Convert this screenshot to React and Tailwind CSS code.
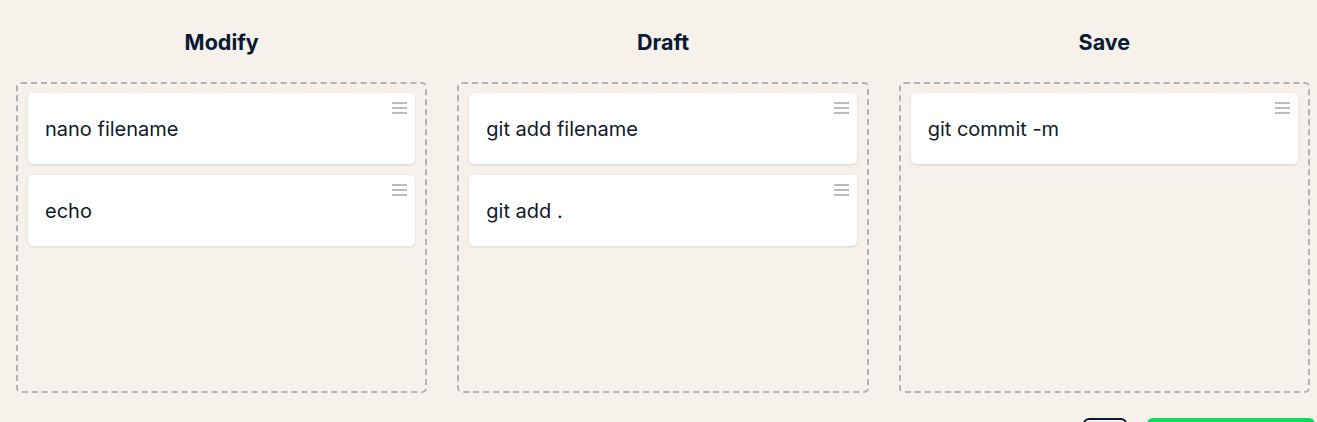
import React from "react";

const columns = [
  { title: "Modify", items: ["nano filename", "echo"] },
  { title: "Draft", items: ["git add filename", "git add ."] },
  { title: "Save", items: ["git commit -m"] },
];

function Handle() {
  return (
    <svg width="15" height="12" viewBox="0 0 15 12" className="absolute right-[8px] top-[9px]">
      <rect x="0" y="0" width="15" height="2" fill="#b9bcc4" />
      <rect x="0" y="5" width="15" height="2" fill="#b9bcc4" />
      <rect x="0" y="10" width="15" height="2" fill="#b9bcc4" />
    </svg>
  );
}

function Card({ label }) {
  return (
    <div className="relative flex h-[71px] items-center rounded-[5px] bg-white pl-[17px] shadow-[0_1px_3px_rgba(0,0,0,0.12)]">
      <span className="text-[20px] text-[#0f1a2a]">{label}</span>
      <Handle />
    </div>
  );
}

export default function App() {
  return (
    <div
      className="h-screen overflow-hidden bg-[#f6f1ea] pl-4 pr-[7px] pt-[28px]"
      style={{ fontFamily: "Inter, 'Noto Sans', sans-serif" }}
    >
      <div className="grid grid-cols-3 gap-[30px]">
        {columns.map((col) => (
          <div key={col.title} className="flex flex-col">
            <h2 className="mb-[26px] text-center text-[21.5px] leading-[28px] font-bold text-[#0a1a33]">
              {col.title}
            </h2>
            <div className="flex h-[311px] flex-col gap-[11px] rounded-[5px] border-2 border-dashed border-[#b3b3b3] px-[10px] pt-[9px]">
              {col.items.map((item) => (
                <Card key={item} label={item} />
              ))}
            </div>
          </div>
        ))}
      </div>
      <div className="mt-[25px] mr-[-5px] flex justify-end gap-[20px]">
        <button className="h-[40px] w-[44px] rounded-md border-2 border-[#0a1a33]" />
        <button className="h-[40px] w-[168px] rounded-md bg-[#00e05a]" />
      </div>
    </div>
  );
}
